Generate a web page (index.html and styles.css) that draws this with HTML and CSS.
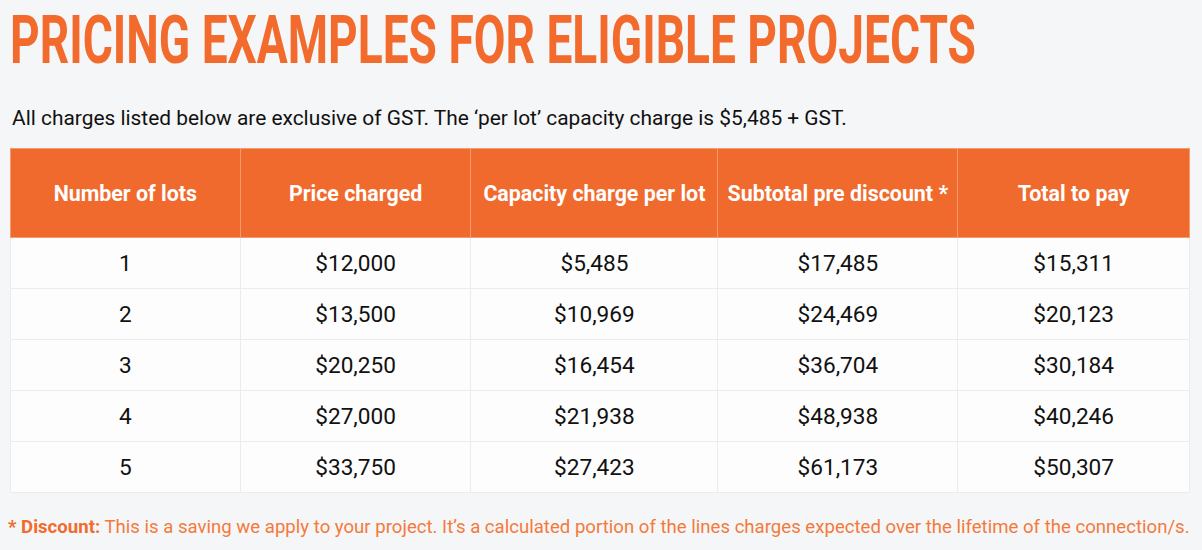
FILE: index.html
```html
<!DOCTYPE html>
<html>
<head>
<meta charset="utf-8">
<link rel="stylesheet" href="styles.css">
</head>
<body>
<div class="page">
  <h1 class="title"><span class="title-text">PRICING EXAMPLES FOR ELIGIBLE PROJECTS</span></h1>
  <p class="intro">All charges listed below are exclusive of GST. The ‘per lot’ capacity charge is $5,485 + GST.</p>
  <table class="pricing">
    <colgroup>
      <col class="c1"><col class="c2"><col class="c3"><col class="c4"><col class="c5">
    </colgroup>
    <thead>
      <tr>
        <th>Number of lots</th>
        <th>Price charged</th>
        <th>Capacity charge per lot</th>
        <th>Subtotal pre discount *</th>
        <th>Total to pay</th>
      </tr>
    </thead>
    <tbody>
      <tr><td>1</td><td>$12,000</td><td>$5,485</td><td>$17,485</td><td>$15,311</td></tr>
      <tr><td>2</td><td>$13,500</td><td>$10,969</td><td>$24,469</td><td>$20,123</td></tr>
      <tr><td>3</td><td>$20,250</td><td>$16,454</td><td>$36,704</td><td>$30,184</td></tr>
      <tr><td>4</td><td>$27,000</td><td>$21,938</td><td>$48,938</td><td>$40,246</td></tr>
      <tr><td>5</td><td>$33,750</td><td>$27,423</td><td>$61,173</td><td>$50,307</td></tr>
    </tbody>
  </table>
  <p class="note"><strong>* Discount:</strong> This is a saving we apply to your project. It’s a calculated portion of the lines charges expected over the lifetime of the connection/s.</p>
</div>
</body>
</html>
```
FILE: styles.css
```css
html, body {
  margin: 0;
  padding: 0;
  background: #f5f6f8;
}
body {
  font-family: Roboto, "Liberation Sans", sans-serif;
  color: #111;
}
.page {
  padding: 0 12px 0 10px;
}
.title {
  margin: 0;
  padding-top: 5px;
  height: 72px;
  font-family: Roboto, "Liberation Sans", sans-serif;
  font-weight: 700;
  font-size: 66px;
  line-height: 72px;
  color: #f26b2d;
  white-space: nowrap;
}
.title-text {
  display: inline-block;
  transform: scaleX(0.698);
  transform-origin: left center;
  margin-right: -420px;
}
.intro {
  margin: 29px 0 0 2px;
  font-size: 20.9px;
  line-height: 24px;
  color: #111;
}
.pricing {
  margin-top: 18px;
  width: 1180px;
  border-collapse: collapse;
  background: #fdfdfd;
  border: 1px solid #ececec;
}
.c1 { width: 230px; }
.c2 { width: 231px; }
.c3 { width: 247px; }
.c4 { width: 240px; }
.c5 { width: 232px; }
.pricing th {
  background: #f16a2d;
  color: #fff;
  font-weight: 700;
  font-size: 21.4px;
  height: 88px;
  padding: 0 4px;
  border: 1px solid #f39a70;
  text-align: center;
  white-space: nowrap;
}
.pricing td {
  height: 50px;
  padding: 0;
  text-align: center;
  font-size: 22.6px;
  border: 1px solid #ececec;
}
.note {
  margin: 22px 0 0 -2px;
  font-size: 18.6px;
  line-height: 24px;
  color: #f47a3c;
  white-space: nowrap;
}
.note strong {
  font-weight: 700;
  color: #f26b2d;
}
```
